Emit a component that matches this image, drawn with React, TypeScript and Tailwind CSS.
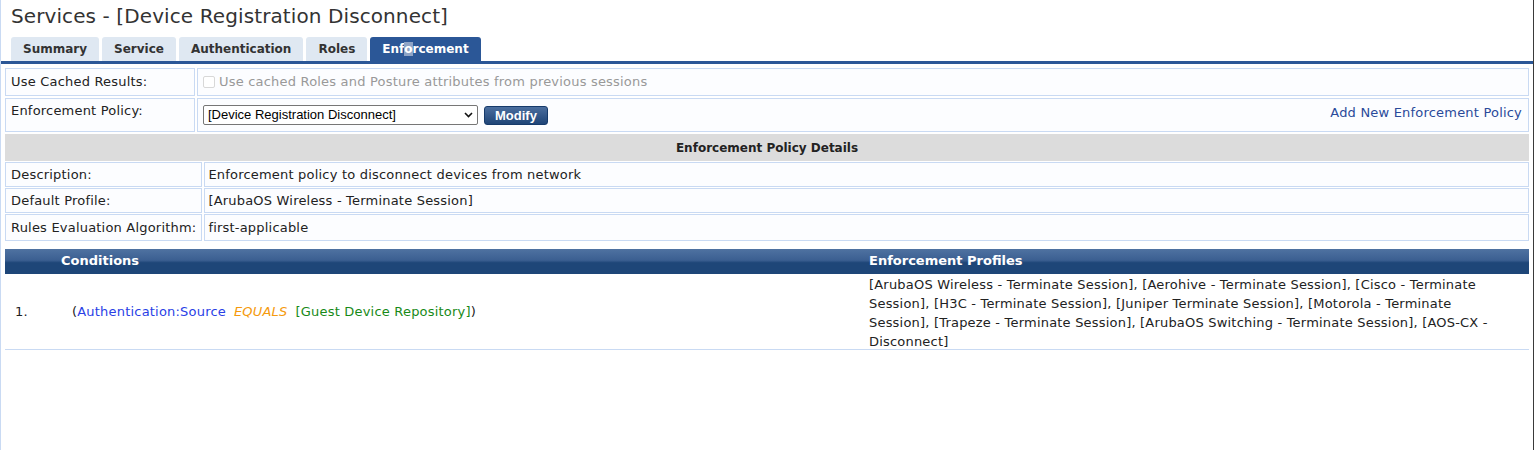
import React from 'react';

const tabs = ['Summary', 'Service', 'Authentication', 'Roles', 'Enforcement'];

const profiles =
  '[ArubaOS Wireless - Terminate Session], [Aerohive - Terminate Session], [Cisco - Terminate Session], [H3C - Terminate Session], [Juniper Terminate Session], [Motorola - Terminate Session], [Trapeze - Terminate Session], [ArubaOS Switching - Terminate Session], [AOS-CX - Disconnect]';

const cell = 'border border-[#c9daf3] bg-[#fcfdff] px-[5px] align-middle tracking-[0.2px]';
const valueCell = 'border border-[#c9daf3] bg-[#fcfdff] pl-[3px] pr-[5px] align-middle tracking-[0.2px]';

export default function App() {
  return (
    <div
      className="w-[1534px] h-[450px] bg-white border-l border-l-[#c9daf3] border-r border-r-[#3a3a3a] text-[#222] text-[13px]"
      style={{ fontFamily: '"DejaVu Sans", Verdana, sans-serif' }}
    >
      {/* Title */}
      <h1 className="pl-[10px] pt-[3px] h-[37px] text-[20px] leading-[26px] tracking-[0.1px] text-[#333]">
        Services - [Device Registration Disconnect]
      </h1>

      {/* Tabs */}
      <div className="flex items-end gap-[3px] pl-[10px] h-[24px]">
        {tabs.map((t) => {
          const active = t === 'Enforcement';
          return (
            <div
              key={t}
              className={
                active
                  ? 'h-[24px] px-[12px] rounded-t-[3px] bg-[#2b5797] text-white font-bold text-[12px] leading-[24px]'
                  : 'h-[24px] px-[12px] rounded-t-[3px] bg-[#dfe8f2] text-[#333] font-bold text-[12px] leading-[24px]'
              }
            >
              {active ? (
                <>
                  Enf<span className="bg-[#8ea4c6]">o</span>rcement
                </>
              ) : (
                t
              )}
            </div>
          );
        })}
      </div>
      <div className="h-[3px] bg-[#2b5797]" />

      <div className="px-[2px] pt-[2px]">
        {/* Top settings */}
        <table className="w-full border-separate border-spacing-[2px]">
          <tbody>
            <tr className="h-[28px]">
              <td className={`${cell} w-[190px] whitespace-nowrap`}>Use Cached Results:</td>
              <td className={`${cell} text-[#999]`}>
                <label className="flex items-center gap-[4px]">
                  <span className="inline-block w-[12px] h-[12px] rounded-[2px] border border-[#d8d8d8] bg-white" />
                  Use cached Roles and Posture attributes from previous sessions
                </label>
              </td>
            </tr>
            <tr className="h-[34px]">
              <td className={`${cell} w-[190px] whitespace-nowrap align-top pt-[2px]`}>Enforcement Policy:</td>
              <td className={cell}>
                <div className="flex items-center justify-between">
                  <div className="flex items-center gap-[6px]">
                    <div
                      className="relative w-[275px] h-[20px] border border-[#767676] rounded-[2px] bg-white text-[13px] leading-[18px] text-black pl-[4px] tracking-normal"
                      style={{ fontFamily: '"Liberation Sans", Arial, sans-serif' }}
                    >
                      [Device Registration Disconnect]
                      <svg
                        className="absolute right-[4px] top-[6px]"
                        width="9"
                        height="6"
                        viewBox="0 0 9 6"
                        fill="none"
                        stroke="#111"
                        strokeWidth="1.6"
                      >
                        <path d="M1 1l3.5 3.5L8 1" />
                      </svg>
                    </div>
                    <button
                      type="button"
                      className="h-[19px] px-[10px] rounded-[3px] bg-gradient-to-b from-[#4b6e9e] to-[#1f4577] border border-[#163a6a] text-white font-bold text-[13px] leading-[17px] tracking-normal"
                      style={{ fontFamily: '"Liberation Sans", Arial, sans-serif' }}
                    >
                      Modify
                    </button>
                  </div>
                  <a className="text-[#2a4a9a] pr-[1px] -mt-[5px]">Add New Enforcement Policy</a>
                </div>
              </td>
            </tr>
          </tbody>
        </table>

        {/* Details */}
        <table className="w-full -mt-[1px] border-separate border-spacing-x-[2px] border-spacing-y-[1px]">
          <tbody>
            <tr className="h-[27px]">
              <td colSpan={2} className="bg-[#dcdcdc] text-center font-bold text-[12px]">
                Enforcement Policy Details
              </td>
            </tr>
            <tr className="h-[25px]">
              <td className={`${cell} w-[192px] whitespace-nowrap`}>Description:</td>
              <td className={valueCell}>Enforcement policy to disconnect devices from network</td>
            </tr>
            <tr className="h-[25px]">
              <td className={`${cell} w-[192px] whitespace-nowrap`}>Default Profile:</td>
              <td className={valueCell}>[ArubaOS Wireless - Terminate Session]</td>
            </tr>
            <tr className="h-[27px]">
              <td className={`${cell} w-[192px] whitespace-nowrap`}>Rules Evaluation Algorithm:</td>
              <td className={valueCell}>first-applicable</td>
            </tr>
          </tbody>
        </table>

        {/* Rules */}
        <div className="mt-[7px] mx-[2px]">
          <div className="flex h-[25px] bg-gradient-to-b from-[#4f72a1] via-[#3b5f91] via-45% to-[#1e4678] to-55% text-white font-bold text-[13px] leading-[24px]">
            <div className="w-[864px] pl-[56px]">Conditions</div>
            <div>Enforcement Profiles</div>
          </div>
          <div className="flex h-[76px] items-center border-b border-[#c9daf3] tracking-[0.2px]">
            <div className="w-[67px] pl-[10px]">1.</div>
            <div className="w-[797px]">
              (<span className="text-[#2a3fe6]">Authentication:Source</span>
              <span className="italic text-[#f59a0c] mx-[8px]">EQUALS</span>
              <span className="text-[#188a18]">[Guest Device Repository]</span>)
            </div>
            <div className="w-[645px] leading-[19px] pt-[2px]">{profiles}</div>
          </div>
        </div>
      </div>
    </div>
  );
}
